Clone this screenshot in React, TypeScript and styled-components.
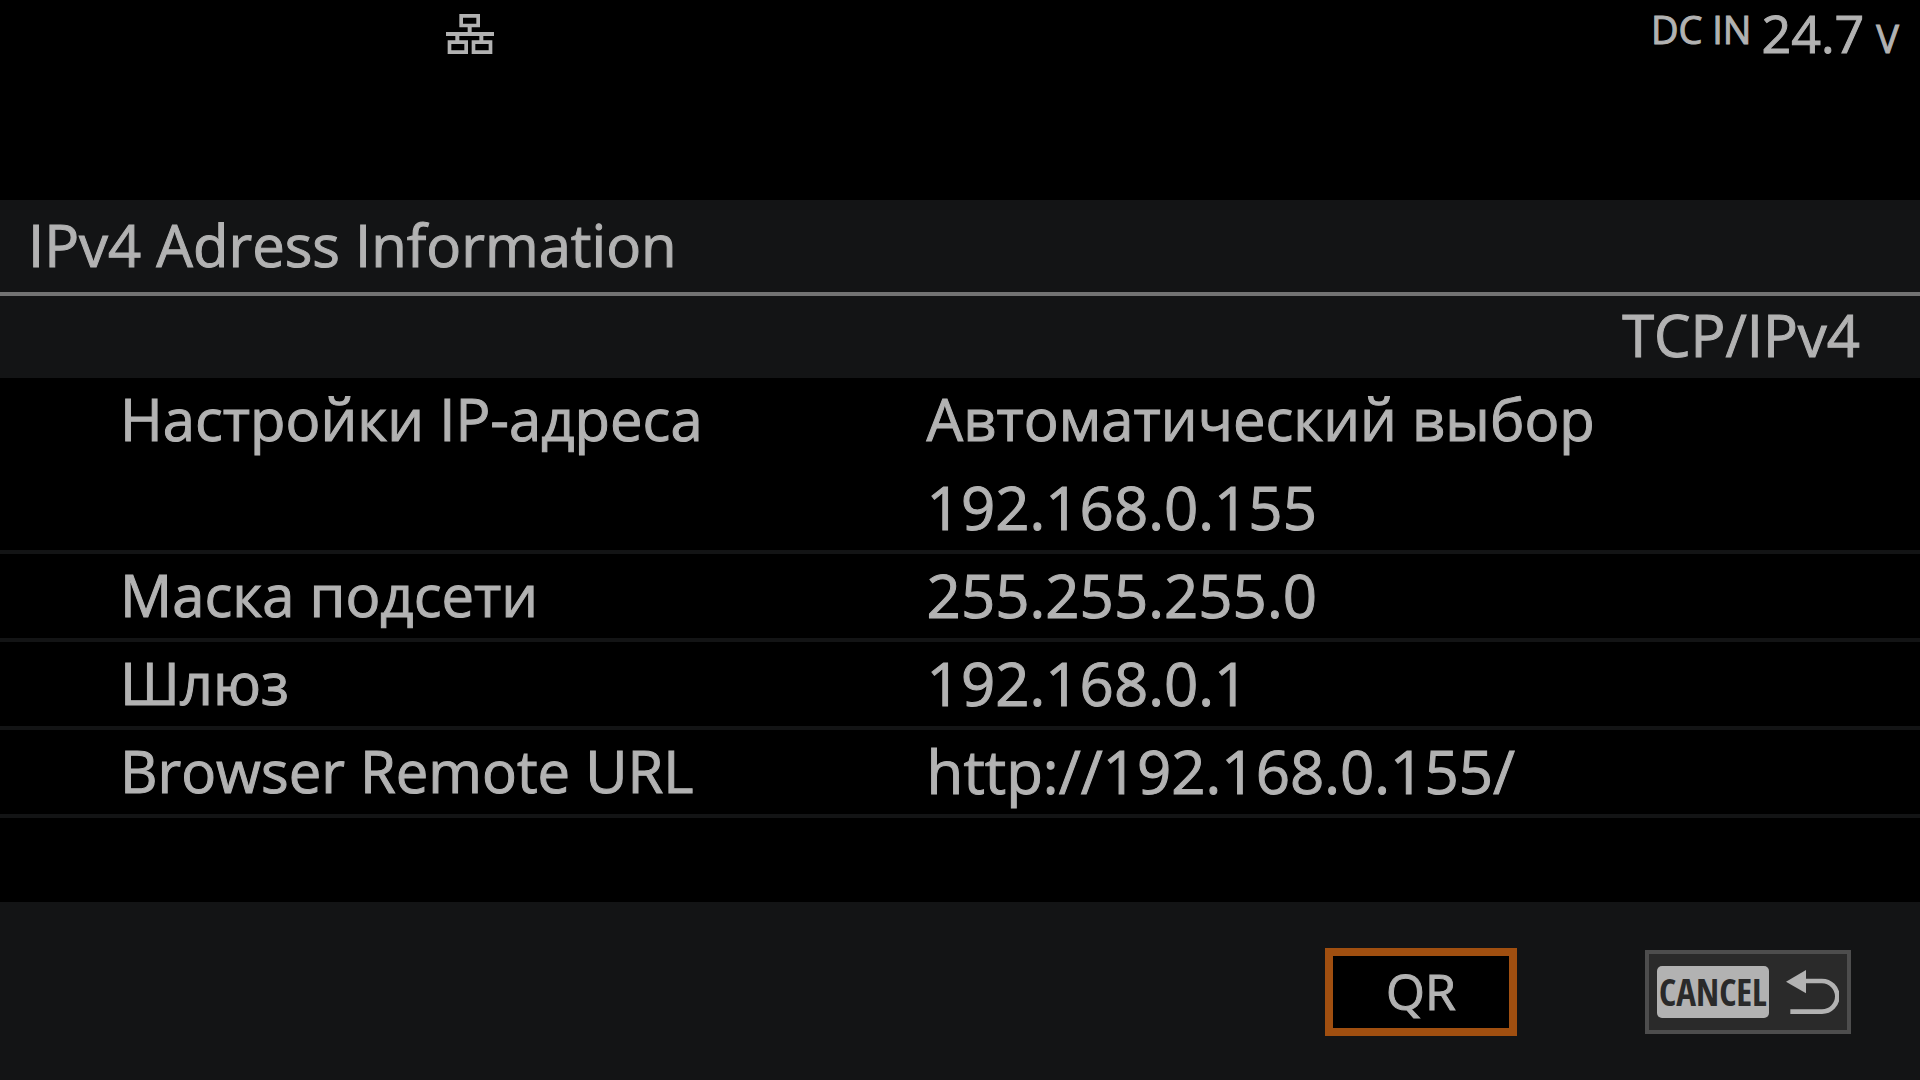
import React from "react";
import styled, { createGlobalStyle } from "styled-components";

const GlobalStyle = createGlobalStyle`
  *, *::before, *::after { box-sizing: border-box; }
  body {
    margin: 0;
    background: #000;
    color: #b2b2b2;
    font-family: "Open Sans", "Noto Sans", sans-serif;
    font-weight: 400;
    -webkit-text-stroke: 1px currentColor;
  }
`;

const Screen = styled.main`
  display: flex;
  flex-direction: column;
  min-height: 100vh;
`;

const StatusBar = styled.header`
  display: flex;
  justify-content: space-between;
  align-items: flex-start;
  min-height: 200px;
  padding: 0 21px 0 446px;
`;

const NetworkIcon = styled.svg`
  width: 48px;
  height: 40px;
  margin-top: 14px;
  fill: #b2b2b2;
`;

const Power = styled.div`
  display: flex;
  align-items: flex-start;
  font-size: 38px;
  line-height: 58px;
`;

const Volts = styled.span`
  display: flex;
  align-items: baseline;
  gap: 12px;
  margin-left: 10px;
`;

const Reading = styled.span`
  font-size: 52px;
  line-height: 66px;
`;

const TitleBar = styled.div`
  display: flex;
  align-items: center;
  height: 96px;
  padding: 0 28px 2px;
  background: #131415;
  border-bottom: 4px solid #737373;
`;

const Title = styled.h1`
  margin: 0;
  font-size: 58px;
  font-weight: inherit;
  line-height: 88px;
`;

const Protocol = styled.h2`
  margin: 0;
  padding: 0 60px 4px 24px;
  background: #131415;
  font-size: 58px;
  font-weight: inherit;
  line-height: 78px;
  text-align: right;
`;

const InfoTable = styled.table`
  width: 100%;
  border-collapse: collapse;
  table-layout: fixed;
  font-size: 58px;
  line-height: 82px;
  text-align: left;
`;

const Row = styled.tr`
  border-bottom: 4px solid #131415;
`;

const Label = styled.th`
  width: 48%;
  padding: 0 0 2px 120px;
  font-weight: inherit;
  vertical-align: top;
`;

const Value = styled.td`
  padding: 0 0 2px 5px;
`;

const Line = styled.div<{ $numeric: boolean }>`
  font-size: ${({ $numeric }) => ($numeric ? 60 : 58)}px;
  & + & { padding-top: 6px; }
`;

const Url = styled.a`
  color: inherit;
  text-decoration: none;
`;

const Footer = styled.footer`
  display: flex;
  flex: 1;
  align-items: flex-start;
  justify-content: flex-end;
  gap: 128px;
  margin-top: 84px;
  padding: 46px 69px 44px;
  background: #131415;
`;

const QrButton = styled.button`
  width: 192px;
  height: 88px;
  padding: 0 0 2px;
  border: 8px solid #a04f10;
  background: #000;
  color: inherit;
  font: 400 50px/70px "Open Sans", sans-serif;
`;

const CancelButton = styled.button`
  display: flex;
  align-items: center;
  justify-content: space-between;
  width: 206px;
  height: 84px;
  margin-top: 2px;
  padding: 0 8px;
  border: 4px solid #4d4d4d;
  background: #2a2a2a;
`;

const KeyCap = styled.span`
  width: 112px;
  height: 52px;
  border-radius: 5px;
  background: #b2b2b2;
  color: #2a2a2a;
  font: 700 37px/52px "Open Sans Condensed", "Roboto Condensed", sans-serif;
  -webkit-text-stroke: 0;
  text-align: center;
`;

const ReturnIcon = styled.svg`
  width: 53px;
  height: 44px;
`;

const rows = [
  { label: "Настройки IP-адреса", values: ["Автоматический выбор", "192.168.0.155"] },
  { label: "Маска подсети", values: ["255.255.255.0"] },
  { label: "Шлюз", values: ["192.168.0.1"] },
  { label: "Browser Remote URL", values: ["http://192.168.0.155/"] },
];

export default function App() {
  return (
    <Screen>
      <GlobalStyle />
      <StatusBar>
        <NetworkIcon viewBox="0 0 144 120" role="img" aria-label="LAN">
          <path
            fillRule="evenodd"
            d="M40 0H102V40H77V54H144V66H112V79H139V120H77V79H100V66H40V79H66V120H5V79H28V66H0V54H65V40H40ZM51 11V29H91V11ZM16 90V109H55V90ZM88 90V109H128V90Z"
          />
        </NetworkIcon>
        <Power>
          <span>DC IN</span>
          <Volts>
            <Reading>24.7</Reading>
            <span>V</span>
          </Volts>
        </Power>
      </StatusBar>
      <TitleBar>
        <Title>IPv4 Adress Information</Title>
      </TitleBar>
      <Protocol>TCP/IPv4</Protocol>
      <InfoTable>
        <tbody>
          {rows.map((row) => (
            <Row key={row.label}>
              <Label scope="row">{row.label}</Label>
              <Value>
                {row.values.map((value) => (
                  <Line key={value} $numeric={/\d/.test(value)}>
                    {value.startsWith("http") ? <Url href={value}>{value}</Url> : value}
                  </Line>
                ))}
              </Value>
            </Row>
          ))}
        </tbody>
      </InfoTable>
      <Footer>
        <QrButton type="button">QR</QrButton>
        <CancelButton type="button">
          <KeyCap>CANCEL</KeyCap>
          <ReturnIcon viewBox="0 0 159 132" aria-hidden="true">
            <path d="M0 35L60 0V70Z" fill="#b2b2b2" />
            <path d="M58 33H108A46 46 0 0 1 108 125H13" fill="none" stroke="#b2b2b2" strokeWidth="14" />
          </ReturnIcon>
        </CancelButton>
      </Footer>
    </Screen>
  );
}
